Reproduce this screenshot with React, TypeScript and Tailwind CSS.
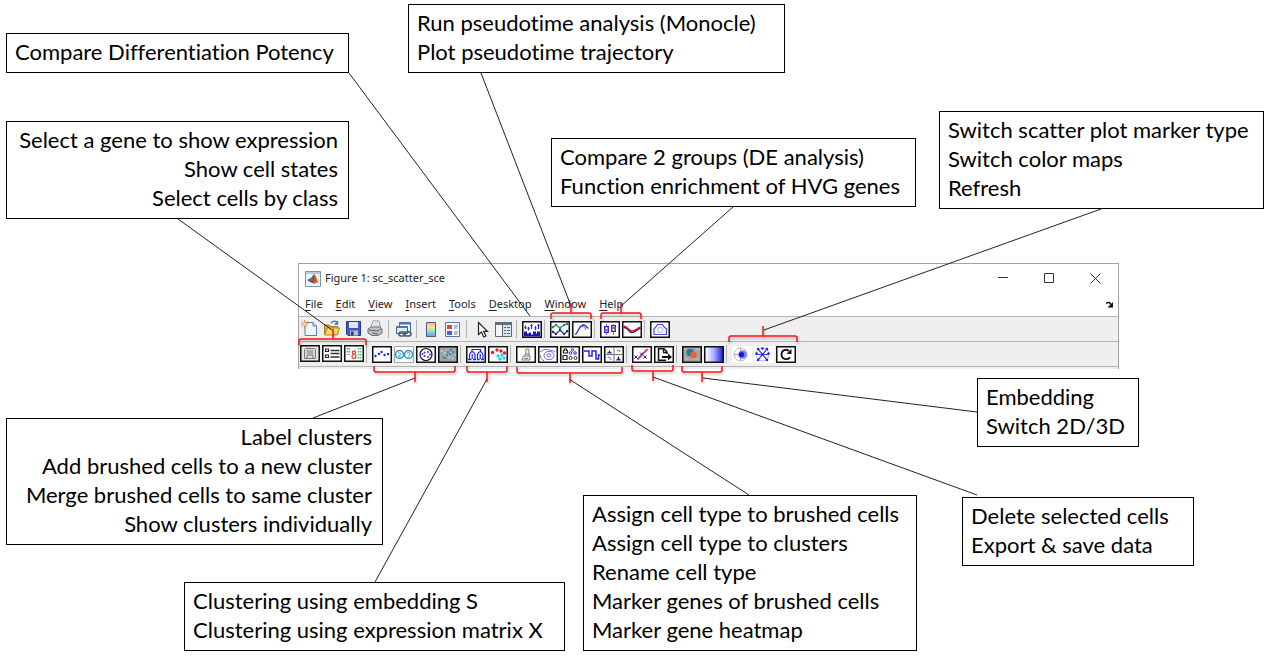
import React from "react";

type Callout = { lines: string[]; place: string; right?: boolean };

const callouts: Callout[] = [
  { lines: ["Compare Differentiation Potency"], place: "left-[6px] top-[33px] w-[343px]" },
  {
    lines: ["Select a gene to show expression", "Show cell states", "Select cells by class"],
    place: "left-[6px] top-[121px] w-[343px]",
    right: true,
  },
  {
    lines: ["Run pseudotime analysis (Monocle)", "Plot pseudotime trajectory"],
    place: "left-[408px] top-[4px] w-[377px]",
  },
  {
    lines: ["Compare 2 groups (DE analysis)", "Function enrichment of HVG genes"],
    place: "left-[551px] top-[138px] w-[365px]",
  },
  {
    lines: ["Switch scatter plot marker type", "Switch color maps", "Refresh"],
    place: "left-[939px] top-[111px] w-[325px]",
  },
  { lines: ["Embedding", "Switch 2D/3D"], place: "left-[977px] top-[378px] w-[162px]" },
  {
    lines: ["Delete selected cells", "Export & save data"],
    place: "left-[962px] top-[497px] w-[232px]",
  },
  {
    lines: [
      "Assign cell type to brushed cells",
      "Assign cell type to clusters",
      "Rename cell type",
      "Marker genes of brushed cells",
      "Marker gene heatmap",
    ],
    place: "left-[583px] top-[495px] w-[334px]",
  },
  {
    lines: ["Clustering using embedding S", "Clustering using expression matrix X"],
    place: "left-[184px] top-[582px] w-[381px]",
  },
  {
    lines: [
      "Label clusters",
      "Add brushed cells to a new cluster",
      "Merge brushed cells to same cluster",
      "Show clusters individually",
    ],
    place: "left-[6px] top-[418px] w-[377px]",
    right: true,
  },
];

const connectors: [number, number, number, number][] = [
  [349, 73, 530, 316],
  [178, 219, 332, 330],
  [481, 73, 571, 306],
  [733, 207, 621, 306],
  [1101, 209, 764, 330],
  [977, 412, 703, 378],
  [977, 495, 653, 377],
  [749, 495, 569, 379],
  [375, 582, 487, 379],
  [313, 418, 415, 378],
];

// x1, x2, bar y, direction of the tick (-1 up, 1 down)
const brackets: [number, number, number, number][] = [
  [299, 366, 339, -1],
  [551, 591, 313, -1],
  [601, 641, 313, -1],
  [729, 797, 336, -1],
  [374, 455, 372, 1],
  [467, 507, 372, 1],
  [517, 622, 373, 1],
  [632, 673, 371, 1],
  [682, 722, 372, 1],
];

function bracketPath([x1, x2, y, d]: [number, number, number, number]) {
  const mid = Math.round((x1 + x2) / 2);
  return `M${x1} ${y - d * 6}V${y - d * 2}Q${x1} ${y} ${x1 + 2} ${y}H${x2 - 2}Q${x2} ${y} ${x2} ${y - d * 2}V${y - d * 6}M${mid} ${y}V${y + d * 10}`;
}

function Frame({ children, fill = "#fff" }: { children?: React.ReactNode; fill?: string }) {
  return (
    <svg width="20" height="17" viewBox="0 0 20 17" fill="none" aria-hidden="true">
      <rect x=".75" y=".75" width="18.5" height="15.5" fill={fill} stroke="#111" strokeWidth="1.500" />
      {children}
    </svg>
  );
}

function Bare({ children }: { children: React.ReactNode }) {
  return (
    <svg width="20" height="17" viewBox="0 0 20 17" fill="none" aria-hidden="true">
      {children}
    </svg>
  );
}

function Dots({ at, r = 1, fill }: { at: [number, number][]; r?: number; fill: string }) {
  return (
    <g fill={fill}>
      {at.map(([x, y]) => (
        <circle key={`${x}-${y}`} cx={x} cy={y} r={r} />
      ))}
    </g>
  );
}

type Tool = { label: string; icon: React.ReactNode };

const blue = "#2222f0";

const topTools: Tool[][] = [
  [
    {
      label: "New figure",
      icon: (
        <Bare>
          <path d="M5 2.5h8l3.5 3.5v9.500H5z" fill="#eef5fc" stroke="#5d7fa8" />
          <path d="M13 2.500V6h3.500" fill="#c8dcf0" stroke="#5d7fa8" />
          <path d="M4.500 0v8M.5 4h8M1.700 1.200l5.600 5.600M7.300 1.200 1.700 6.800" stroke="#e8905c" />
          <circle cx="4.500" cy="4" r="1.500" fill="#fbdc9a" />
        </Bare>
      ),
    },
    {
      label: "Open file",
      icon: (
        <Bare>
          <path d="M2.500 14V5h5l1.500 1.500h7V14z" fill="#dcae35" stroke="#a8801c" />
          <path d="m2.500 15 3-7h12l-2.500 7z" fill="#fbdc68" stroke="#b68d22" />
          <path d="M9 3c2-2.500 5-2.500 6.500 0m0-2v3h-3" stroke="#4e73a5" strokeWidth="1.300" />
        </Bare>
      ),
    },
    {
      label: "Save figure",
      icon: (
        <Bare>
          <path d="M2.500 1.500h14v14H4l-1.500-1.500z" fill="#4258b8" stroke="#283a8a" />
          <path d="M5 2h9v6H5z" fill="#dfe8fa" />
          <path d="M6 10.500h8v5H6z" fill="#b6c0d8" />
          <path d="M7 11.500h2.500v4H7z" fill="#24347a" />
        </Bare>
      ),
    },
    {
      label: "Print figure",
      icon: (
        <Bare>
          <path d="m5 8 2-7h6l1.500 7z" fill="#f7fafc" stroke="#8d949c" />
          <path d="m2 9 3-2h9l2 2v4l-4 2.500H6L2 13z" fill="#bfc1c4" stroke="#6d7074" />
          <path d="m3 10 8 1 4-2M6 13l6 1" stroke="#63666a" />
          <path d="M8 3.500h4M7.500 5.500h5" stroke="#b6c4d6" />
        </Bare>
      ),
    },
  ],
  [
    {
      label: "Link plot",
      icon: (
        <Bare>
          <path d="M5.500 1.500h11v9h-11z" fill="#f3f7fb" stroke="#3f6294" />
          <path d="M5 1h12v2.500H5z" fill="#4d76ac" />
          <path d="M2.500 5.500h11v7h-11z" fill="#e2ecf6" stroke="#3f6294" />
          <path d="M2 5h12v2H2z" fill="#4d76ac" />
          <g stroke="#45586f" strokeWidth="1.500">
            <rect x="5" y="11" width="6" height="4" rx="2" />
            <rect x="10" y="11" width="7" height="4" rx="2" />
          </g>
        </Bare>
      ),
    },
  ],
  [
    {
      label: "Insert colorbar",
      icon: (
        <Bare>
          <defs>
            <linearGradient id="bar" x1="0" y1="0" x2="0" y2="1">
              <stop offset="0" stopColor="#ff9d92" />
              <stop offset=".3" stopColor="#ffe58a" />
              <stop offset=".6" stopColor="#8fe8c4" />
              <stop offset="1" stopColor="#7a90f4" />
            </linearGradient>
          </defs>
          <path d="M4.500 1.500h9v14h-9z" fill="url(#bar)" stroke="#3f5f90" />
        </Bare>
      ),
    },
    {
      label: "Insert legend",
      icon: (
        <Bare>
          <path d="M1.500 1.500h14v14h-14z" fill="#f6f9ff" stroke="#5b77a6" />
          <path d="M3 4h5v4H3z" fill="#e04646" />
          <path d="M3 10h5v4H3z" fill="#4560d8" />
          <path d="M10 5h4M10 7h3M10 11h4M10 13h3" stroke="#6f7b90" />
        </Bare>
      ),
    },
  ],
  [
    {
      label: "Edit plot",
      icon: (
        <Bare>
          <path d="M6.500 1.500v12l3-2.500 2.200 5 2.200-1-2.200-4.700h3.800z" fill="#fff" stroke="#222" strokeWidth="1.200" />
        </Bare>
      ),
    },
    {
      label: "Open property inspector",
      icon: (
        <Bare>
          <path d="M1.500 1.500h16v14h-16z" fill="#f4f4f4" stroke="#606770" />
          <path d="M1 1h17v3H1z" fill="#646f7c" />
          <path d="M8.500 4v11" stroke="#606770" />
          <path d="M9 4h8v11H9z" fill="#d6e4ef" />
          <path d="M10 6.500h2m1 0h3m-6 3h2m1 0h3m-6 3h2m1 0h3" stroke="#4e6980" />
        </Bare>
      ),
    },
  ],
  [
    {
      label: "Compare differentiation potency",
      icon: (
        <Frame>
          <path d="M2 15.500v-5h3v2h2v-1h2v2h2v-3h3v2h1v-2h3v5z" fill="#1818b8" />
          <path d="M3.500 8V4.500m3 5V6m3 2V3m4 6V5m3 3V3" stroke={blue} strokeWidth="1.200" />
          <path d="M2.500 6.500h2M5.500 7.500h2M8.500 4.500h2M12.500 7h2m1-2.500h2" stroke={blue} />
        </Frame>
      ),
    },
  ],
  [
    {
      label: "Run pseudotime analysis",
      icon: (
        <Frame>
          <path d="m2 7 4-3 4 3 4-3 4-1" stroke="#23934b" strokeWidth="1.200" />
          <path d="m2 10 4 3 4-4 4 4 4-3" stroke="#24317c" strokeWidth="1.200" />
          <Dots at={[[3, 6], [6, 4], [10, 7], [14, 4], [17, 3]]} fill="#23934b" r={1.200} />
          <Dots at={[[3, 11], [6, 13], [10, 9], [14, 13], [17, 10]]} fill="#24317c" r={1.200} />
        </Frame>
      ),
    },
    {
      label: "Plot pseudotime trajectory",
      icon: (
        <Frame>
          <path d="M3 13.500c3-1 4-9 8-9.500 3 0 3 2 5.500 3.500" stroke={blue} strokeWidth="1.300" />
          <path d="M10 6c2-1 3 0 3.500 3M9 5c2-2 4-1 5 1" stroke="#5a6ab0" />
        </Frame>
      ),
    },
  ],
  [
    {
      label: "Compare two groups",
      icon: (
        <Frame>
          <path d="M6.500 3v11M13.500 3v11" stroke="#4040c0" strokeWidth=".8" />
          <path d="M4.700 5.700h3.600v5.600H4.700zm7-1h3.600v5.600h-3.600z" fill="#fff" stroke={blue} strokeWidth="1.300" />
          <path d="M4.500 9h4m3-2h4" stroke="#e22a2a" strokeWidth="1.400" />
        </Frame>
      ),
    },
    {
      label: "Function enrichment",
      icon: (
        <Frame>
          <path d="M1.500 6.500c4-1 5 5 8.500 5s5-3 8.500-4.500" stroke="#1d1d6c" strokeWidth="1.600" />
          <path d="M1.500 5c4 0 5 5 8.500 5s5-3 8.500-4" stroke="#f02020" strokeWidth="1.600" />
        </Frame>
      ),
    },
  ],
  [
    {
      label: "Save snapshot",
      icon: (
        <Frame>
          <path d="M4 13.500V7.500l1.500-1 2-3h5l2 3 2 1v6z" stroke="#4848f2" strokeWidth="1.200" />
          <circle cx="10.200" cy="9" r="2.600" stroke="#a0a8f8" strokeWidth=".9" />
        </Frame>
      ),
    },
  ],
];

const bottomTools: Tool[][] = [
  [
    {
      label: "Show gene expression",
      icon: (
        <Frame fill="#e4e4e4">
          <path d="M5.500 3.500h9l1 1v9h-11v-9z" fill="#ddd" stroke="#777" />
          <path d="M6.500 6h7M6.500 8h7M7 13v-3h6v3" stroke="#777" />
        </Frame>
      ),
    },
    {
      label: "Show cell states",
      icon: (
        <Frame>
          <path d="M3.500 4h3v2.500h-3zm0 6h3v2.500h-3z" stroke="#222" strokeWidth="1.200" />
          <path d="M8.500 5.500h9M8.500 8.500h9M8.500 12h9" stroke="#333" strokeWidth="1.300" />
        </Frame>
      ),
    },
    {
      label: "Select cells by class",
      icon: (
        <Frame>
          <g stroke="#39c558" strokeWidth="1.500" strokeDasharray="1.500 1.500">
            <path d="M3.500 3v7M5.500 3v7M14.500 3v11M16.500 3v11" />
          </g>
          <circle cx="10" cy="7.500" r="1.700" stroke="#e33" strokeWidth="1.200" />
          <circle cx="10" cy="11.500" r="2" stroke="#e33" strokeWidth="1.200" />
        </Frame>
      ),
    },
  ],
  [
    {
      label: "Label clusters",
      icon: (
        <Frame>
          <Dots at={[[3.500, 10], [7, 8], [9.500, 6], [12.500, 9], [16, 8]]} fill={blue} r={1.200} />
        </Frame>
      ),
    },
    {
      label: "Add brushed cells to a new cluster",
      icon: (
        <Bare>
          <path d="M0 0h20v17H0z" fill="#fff" />
          <path d="M.5.5h19v16H.5z" stroke="#a8a8a8" />
          <g stroke="#2795c9" strokeWidth="1.500">
            <circle cx="5.500" cy="8.500" r="4" />
            <circle cx="14.500" cy="8.500" r="4" />
          </g>
          <path d="m4 6 3 2-3 2 3 1M13 7l2-1 1 3-2 2" stroke="#49b4d8" />
        </Bare>
      ),
    },
    {
      label: "Merge brushed cells",
      icon: (
        <Frame>
          <circle cx="10" cy="8.500" r="6" stroke="#111" strokeWidth="1.200" />
          <Dots at={[[6.500, 8], [8.500, 6.500], [8.500, 10], [12, 6], [14, 8.500], [12, 11]]} fill={blue} r={0.900} />
        </Frame>
      ),
    },
    {
      label: "Show clusters individually",
      icon: (
        <Frame fill="#9aa3a5">
          <path d="m2 4 5 3-4 5 7-3 5 4M7 3l6 4 4-4" stroke="#b9c2bd" />
          <Dots at={[[10, 6], [13, 4], [15, 6], [9, 9], [7, 12], [5, 11], [12, 8]]} fill="#2f78aa" />
          <Dots at={[[4, 5], [7, 7], [15, 12], [11, 12], [17, 9]]} fill="#dce2dc" r={0.700} />
        </Frame>
      ),
    },
  ],
  [
    {
      label: "Cluster by embedding",
      icon: (
        <Frame>
          <path d="M6 6V3.500h8.500V6" stroke={blue} strokeWidth="1.200" />
          <path d="M3.500 13V8.500L5 6h2.500L9 8.500V13M11.500 13V8.500L13 6h2.500L17 8.500V13M6.200 8v5M14.200 8v5" stroke={blue} strokeWidth="1.200" />
          <path d="M2 13.500h3.500m1.500 0h3m1 0h2.500m1.500 0h3" stroke={blue} strokeWidth="1.300" />
        </Frame>
      ),
    },
    {
      label: "Cluster by expression matrix",
      icon: (
        <Frame>
          <Dots at={[[4.500, 6.500], [9, 4], [13, 5], [16.500, 7]]} fill="#e81f26" r={1.700} />
          <Dots at={[[10, 10], [14, 9], [16, 12], [12, 13]]} fill="#20d4ef" r={1.700} />
        </Frame>
      ),
    },
  ],
  [
    {
      label: "Assign cell type to brushed cells",
      icon: (
        <Frame>
          <path d="M10 3h3v5l1 2v4H5.500l2-4L9.500 8z" fill="#eee" stroke="#888" />
          <path d="M8 10h6M9.500 8H13M8 12.500h4" stroke="#777" />
        </Frame>
      ),
    },
    {
      label: "Assign cell type to clusters",
      icon: (
        <Frame>
          <g stroke="#5555ef" strokeWidth=".9">
            <ellipse cx="11" cy="9.500" rx="5" ry="4.200" />
            <ellipse cx="11" cy="9.500" rx="2" ry="1.600" />
            <path d="M2 6c3-3 7-3 9-2s4 0 6 2M2 9c0 3 2 4 4 6" />
          </g>
        </Frame>
      ),
    },
    {
      label: "Rename cell type",
      icon: (
        <Frame>
          <path d="M3.500 7V4.500h1V3h2v1.500h1V7zM3 9.500h4v4H3z" stroke="#222" strokeWidth="1.200" />
          <g stroke={blue}>
            <circle cx="12.500" cy="3.800" r="1.200" />
            <circle cx="10.500" cy="7" r="1.300" />
            <circle cx="15" cy="7" r="1.300" />
          </g>
          <g stroke="#333">
            <circle cx="10.500" cy="12" r="1.500" />
            <circle cx="15.500" cy="12" r="1.500" />
          </g>
        </Frame>
      ),
    },
    {
      label: "Marker genes",
      icon: (
        <Frame>
          <path d="M2 5h5v5h3V5h4v8h2.500V9H18" stroke={blue} strokeWidth="1.500" />
        </Frame>
      ),
    },
    {
      label: "Marker gene heatmap",
      icon: (
        <Frame>
          <path d="M10 1v15M1 8.500h18" stroke="#777" />
          <path d="m4 7 1.500-3L7 7zm9 7 1.500-4L16 14z" fill="#1a1a70" />
          <path d="m13 5 2-1 1 2M4 11l2 1 1 2" stroke="#5b65de" />
          <path d="M3 7h5M12 14h5" stroke="#1a1a70" strokeWidth=".8" />
        </Frame>
      ),
    },
  ],
  [
    {
      label: "Delete selected cells",
      icon: (
        <Frame>
          <path d="M5.500 13.500 15.500 3" stroke="#e8242c" strokeWidth="1.800" />
          <path d="m2.500 9.500 3 3m0-3-3 3m9-3 3 3m0-3-3 3M8 6.500l3 3m0-3-3 3" stroke={blue} />
        </Frame>
      ),
    },
    {
      label: "Export and save data",
      icon: (
        <Frame>
          <path d="M12 14.200H4.500V2.800H10L13 6v2" stroke="#111" strokeWidth="1.500" />
          <path d="M9.500 3v3.500H13" stroke="#111" strokeWidth="1.300" />
          <path d="M8 10h6V7.500l4 3.500-4 3.500V12H8z" fill="#111" />
        </Frame>
      ),
    },
  ],
  [
    {
      label: "Embedding",
      icon: (
        <Frame fill="#a4a5a2">
          <path d="m2 3 3 1m9-1 4 1M3 12l3 2m7 0 4-2" stroke="#c5c5c0" />
          <circle cx="8" cy="6.500" r="3.700" fill="#2478ad" />
          <circle cx="11.500" cy="9" r="3.200" fill="#ea632e" />
        </Frame>
      ),
    },
    {
      label: "Switch 2D/3D",
      icon: (
        <Bare>
          <defs>
            <linearGradient id="ramp">
              <stop offset=".1" stopColor="#f4f6ff" />
              <stop offset=".5" stopColor="#a9adfa" />
              <stop offset="1" stopColor="#1616f0" />
            </linearGradient>
          </defs>
          <rect x=".75" y=".75" width="18.500" height="15.500" fill="url(#ramp)" stroke="#111" strokeWidth="1.500" />
        </Bare>
      ),
    },
  ],
  [
    {
      label: "Switch scatter plot marker type",
      icon: (
        <Bare>
          <path d="M0 0h20v17H0z" fill="#fff" />
          <circle cx="8.500" cy="8.500" r="6.500" stroke="#999" strokeDasharray="1.500 .7" />
          <path d="M2 8.500h6M8.500 2v13" stroke="#aaa" />
          <circle cx="10.500" cy="8.500" r="4.300" fill="#7579f5" />
          <circle cx="9.500" cy="8.500" r="2.600" fill="#1717ca" />
        </Bare>
      ),
    },
    {
      label: "Switch color maps",
      icon: (
        <Bare>
          <path d="M0 0h20v17H0z" fill="#fff" />
          <circle cx="8.500" cy="8.500" r="6.500" stroke="#b4b4b4" />
          <path d="m4 3 9 11M13 3 4 14M2 8.500h13" stroke="#3838ec" strokeWidth="1.200" />
          <Dots at={[[4, 3], [8.500, 2.500], [13, 3], [2.500, 7.500], [14.500, 7.500], [4, 14], [13, 14], [8.500, 8.500]]} fill="#2929ed" r={1.300} />
        </Bare>
      ),
    },
    {
      label: "Refresh",
      icon: (
        <Frame>
          <path d="M13 5C10.500 2.500 5.500 4 5.500 8.500s5.500 6 8.500 3" stroke="#111" strokeWidth="1.800" />
          <path d="M15.500 3v5h-5z" fill="#111" />
        </Frame>
      ),
    },
  ],
];

function Toolbar({ groups, label }: { groups: Tool[][]; label: string }) {
  return (
    <div role="toolbar" aria-label={label} className="flex h-[25px] items-start border-t border-[#b4b4b4] bg-[#efefef] pl-px pt-[3px]">
      {groups.map((tools, i) => (
        <div key={i} className="flex">
          {i > 0 && <span className="mr-[3px] h-[18px] w-[3px] border-l border-[#b4b4b4]" />}
          {tools.map((t) => (
            <button key={t.label} type="button" aria-label={t.label} className="w-[22px]">
              {t.icon}
            </button>
          ))}
        </div>
      ))}
    </div>
  );
}

const menus = ["File", "Edit", "View", "Insert", "Tools", "Desktop", "Window", "Help"];

function FigureWindow() {
  return (
    <section
      aria-label="Figure 1"
      className="absolute left-[298px] top-[263px] w-[821px] border-x border-t border-[#a3a3a3] bg-white font-['Noto_Sans','Open_Sans',sans-serif] text-[11px] text-[#222]"
    >
      <header className="flex h-[29px] items-center pl-1.5">
        <svg width="16" height="16" viewBox="0 0 16 16" aria-hidden="true">
          <path d="M.5.5h15v15H.5z" fill="#eef3f8" stroke="#7c95ae" />
          <path d="M1 1h14v2H1z" fill="#b8cadb" />
          <path d="m2 9 4-2 3-4-2 9-2-1z" fill="#3172ad" />
          <path d="M9 3c2 1 3 7 5 9-2-1-3-1-4 1-1 0-2-1-3-1z" fill="#df542a" />
          <path d="m9 3-2 9c2-1 2-6 2-9z" fill="#792b20" />
        </svg>
        <h1 className="ml-1 flex-1">Figure 1: sc_scatter_sce</h1>
        <button type="button" aria-label="Minimize" className="flex h-7 w-[46px] items-center justify-center">
          <svg width="11" height="11" viewBox="0 0 11 11" stroke="#333" aria-hidden="true">
            <path d="M0 4.500h10" />
          </svg>
        </button>
        <button type="button" aria-label="Maximize" className="flex h-7 w-[46px] items-center justify-center">
          <svg width="11" height="11" viewBox="0 0 11 11" fill="none" stroke="#333" aria-hidden="true">
            <path d="M.5.5h9v9h-9z" />
          </svg>
        </button>
        <button type="button" aria-label="Close" className="flex h-7 w-[46px] items-center justify-center">
          <svg width="11" height="11" viewBox="0 0 11 11" stroke="#333" aria-hidden="true">
            <path d="m.5.5 10 10m0-10-10 10" />
          </svg>
        </button>
      </header>
      <nav className="flex h-[23px] items-center gap-[13px] pl-1.5 pr-1">
        {menus.map((m) => (
          <button key={m} type="button">
            <span className="underline underline-offset-2">{m[0]}</span>
            {m.slice(1)}
          </button>
        ))}
        <button type="button" aria-label="Dock figure" className="ml-auto">
          <svg width="8" height="8" viewBox="0 0 8 8" aria-hidden="true">
            <path d="M0 2.500C2 .5 4 1.500 5 3.500" fill="none" stroke="#111" strokeWidth="1.500" />
            <path d="M7 1v5.500H1.500z" fill="#111" />
          </svg>
        </button>
      </nav>
      <Toolbar groups={topTools} label="Figure toolbar" />
      <Toolbar groups={bottomTools} label="Single cell toolbar" />
      <div className="h-[3px] border-t border-[#b4b4b4] bg-[#efefef]" />
    </section>
  );
}

export default function App() {
  return (
    <main className="relative min-h-screen w-full overflow-hidden bg-white">
      <FigureWindow />
      {callouts.map((c) => (
        <div
          key={c.lines[0]}
          className={`absolute whitespace-nowrap border border-black bg-white pb-1.5 pl-2 pr-2.5 pt-[3px] font-['Lato',sans-serif] text-[22px] leading-[29px] text-black [font-variant-ligatures:none] ${c.place} ${c.right ? "text-right" : "text-left"}`}
        >
          {c.lines.map((line) => (
            <p key={line}>{line}</p>
          ))}
        </div>
      ))}
      <svg className="pointer-events-none absolute left-0 top-0 overflow-visible" width="1269" height="659" fill="none" aria-hidden="true">
        {connectors.map(([x1, y1, x2, y2]) => (
          <path key={`${x1}-${y1}`} d={`M${x1} ${y1}L${x2} ${y2}`} stroke="#222" />
        ))}
        <g className="drop-shadow-[1px_2px_1px_rgba(0,0,0,0.25)]" stroke="#f5141c" strokeWidth="1.500">
          {brackets.map((b) => (
            <path key={b[0]} d={bracketPath(b)} />
          ))}
        </g>
      </svg>
    </main>
  );
}
